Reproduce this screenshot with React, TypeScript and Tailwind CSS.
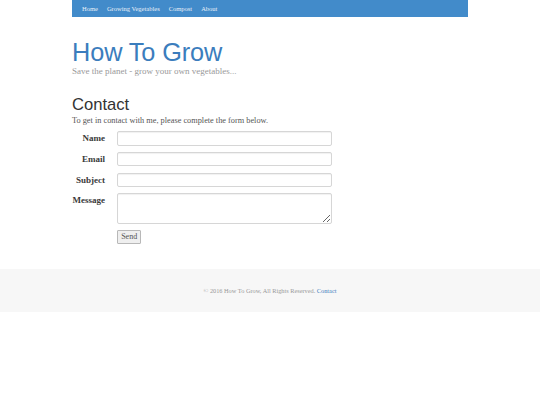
import React from "react";

const serif = "font-['Liberation_Serif','Times_New_Roman',serif]";

function Row({ label, children }: { label: string; children: React.ReactNode }) {
  return (
    <div className="flex items-start">
      <label
        className={`w-[33px] shrink-0 text-right ${serif} font-bold text-[9px] leading-[13.2px] pt-[1.2px] text-[#3a3a3a] whitespace-nowrap`}
      >
        {label}
      </label>
      <div className="ml-[12px]">{children}</div>
    </div>
  );
}

export default function App() {
  const inputCls =
    "block w-[215px] h-[14.4px] bg-white border border-[#d6d6d6] rounded-[2px] shadow-[inset_0_1px_1px_rgba(0,0,0,0.06)] outline-none";
  return (
    <div className="w-[540px] min-h-[405px] bg-white">
      <div className="w-[396px] mx-auto">
        <nav className={`h-[17px] bg-[#428bca] flex items-center pl-[10px] gap-[9px] ${serif} text-[6.5px] text-[#e8f0f8]`}>
          <span>Home</span>
          <span>Growing Vegetables</span>
          <span>Compost</span>
          <span>About</span>
        </nav>
        <h1 className="mt-[22.5px] font-['Liberation_Sans',Arial,sans-serif] text-[25.3px] leading-[25px] text-[#3b7dbd] tracking-[-0.1px]">
          How To Grow
        </h1>
        <p className={`mt-[1.5px] ${serif} text-[9px] leading-[11px] text-[#999]`}>
          Save the planet - grow your own vegetables...
        </p>
        <h2 className="mt-[19px] font-['Liberation_Sans',Arial,sans-serif] text-[16.6px] leading-[17px] text-[#333]">
          Contact
        </h2>
        <p className={`mt-[3.4px] ${serif} text-[8.3px] leading-[10px] text-[#555]`}>
          To get in contact with me, please complete the form below.
        </p>
        <form className="mt-[4.8px] flex flex-col gap-[6.3px]" onSubmit={(e) => e.preventDefault()}>
          <Row label="Name">
            <input type="text" className={inputCls} />
          </Row>
          <Row label="Email">
            <input type="text" className={inputCls} />
          </Row>
          <Row label="Subject">
            <input type="text" className={inputCls} />
          </Row>
          <Row label="Message">
            <textarea className="block w-[215px] h-[30.7px] bg-white border border-[#d6d6d6] rounded-[2px] shadow-[inset_0_1px_1px_rgba(0,0,0,0.06)] outline-none resize-y" />
          </Row>
          <div className="pl-[45.3px]">
            <button
              type="submit"
              className={`w-[23.7px] h-[13.4px] flex items-center justify-center bg-[#efefef] border border-[#b8b8b8] rounded-[1px] ${serif} text-[8px] leading-none text-[#555]`}
            >
              Send
            </button>
          </div>
        </form>
      </div>
      <footer className={`mt-[25.3px] h-[43px] bg-[#f7f7f7] flex items-center justify-center ${serif} text-[6.3px] text-[#999]`}>
        <span>
          © 2016 How To Grow, All Rights Reserved. <span className="text-[#3b7dbd]">Contact</span>
        </span>
      </footer>
    </div>
  );
}
